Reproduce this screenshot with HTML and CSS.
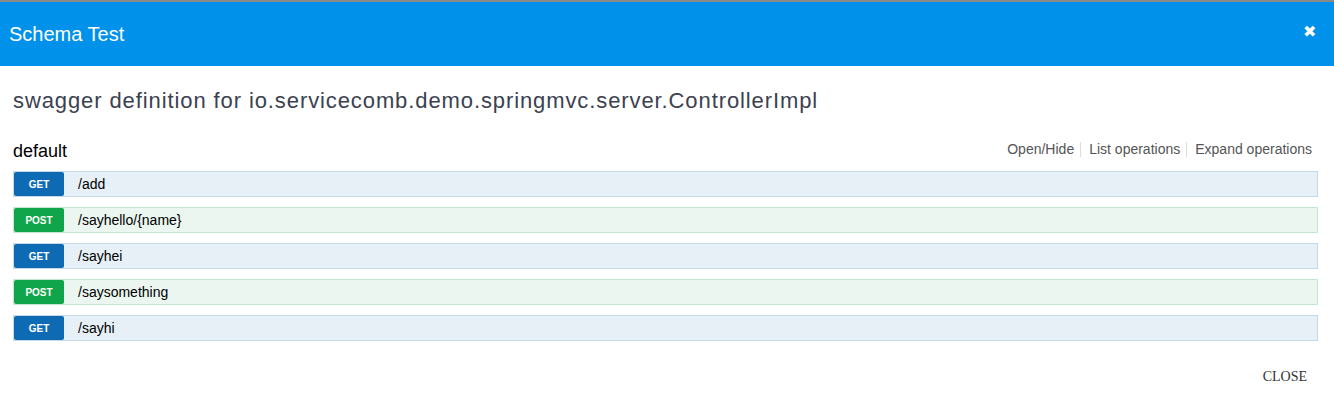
FILE: index.html
```html
<!DOCTYPE html>
<html lang="en">
  <head>
    <meta charset="UTF-8" />
    <title>Schema Test</title>
    <link rel="stylesheet" href="styles.css">
  </head>
  <body>
    <div class="dialog">
      <div class="dialog-header">
        <span class="dialog-title">Schema Test</span>
        <span class="dialog-close">&#10006;</span>
      </div>
      <div class="dialog-body">
        <h2 class="info-title">swagger definition for io.servicecomb.demo.springmvc.server.ControllerImpl</h2>
        <div class="resource">
          <div class="resource-heading">
            <span class="resource-name">default</span>
            <ul class="options">
              <li>Open/Hide</li>
              <li>List operations</li>
              <li>Expand operations</li>
            </ul>
          </div>
          <ul class="endpoints">
            <li class="op get"><span class="method">GET</span><span class="path">/add</span></li>
            <li class="op post"><span class="method">POST</span><span class="path">/sayhello/{name}</span></li>
            <li class="op get"><span class="method">GET</span><span class="path">/sayhei</span></li>
            <li class="op post"><span class="method">POST</span><span class="path">/saysomething</span></li>
            <li class="op get"><span class="method">GET</span><span class="path">/sayhi</span></li>
          </ul>
        </div>
      </div>
      <div class="dialog-footer">
        <span class="close-btn">CLOSE</span>
      </div>
    </div>
  </body>
</html>
```

FILE: styles.css
```css
body {
  margin: 0;
  padding: 0;
  background: #fff;
  font-family: "Liberation Sans", Arial, sans-serif;
}

.dialog {
  width: 1334px;
}

/* blue title bar */
.dialog-header {
  border-top: 2px solid #8a8a8a;
  height: 64px;
  background: #0091ea;
  display: flex;
  align-items: center;
  justify-content: space-between;
  padding: 0 18px 0 9px;
  color: #fff;
}

.dialog-title {
  font-size: 20px;
}

.dialog-close {
  font-size: 16px;
  margin-top: -6px;
}

.dialog-body {
  padding: 0 16px 0 13px;
}

.info-title {
  margin: 22px 0 0;
  font-size: 22px;
  letter-spacing: 0.9px;
  font-weight: normal;
  color: #3b4151;
  line-height: 26px;
}

.resource-heading {
  display: flex;
  justify-content: space-between;
  align-items: center;
  margin-top: 24px;
  height: 26px;
}

.resource-name {
  font-size: 18px;
  color: #000;
}

.options {
  list-style: none;
  margin: -3px 0 0;
  padding: 0 6px 0 0;
  display: flex;
  font-size: 14px;
  color: #555;
}

.options li {
  padding: 0 6px 0 8px;
  border-left: 1px solid #ddd;
  line-height: 15px;
}

.options li:first-child {
  border-left: none;
}

.options li:last-child {
  padding-right: 0;
}

.endpoints {
  list-style: none;
  margin: 7px 0 0;
  padding: 0;
  display: flex;
  flex-direction: column;
  gap: 10px;
}

.op {
  display: flex;
  align-items: center;
  height: 24px;
  border: 1px solid;
}

.op.get {
  background: #e7f0f7;
  border-color: #c3d9ec;
}

.op.post {
  background: #ebf6f0;
  border-color: #c3e8d1;
}

.method {
  width: 50px;
  height: 24px;
  line-height: 26px;
  text-align: center;
  color: #fff;
  font-size: 10px;
  font-weight: bold;
  border-radius: 2px;
}

.get .method {
  background: #0f6ab4;
}

.post .method {
  background: #10a54a;
}

.path {
  padding-left: 14px;
  font-size: 14px;
  color: #000;
}

.dialog-footer {
  display: flex;
  justify-content: flex-end;
  padding: 28px 27px 0 0;
}

.close-btn {
  font-family: "Liberation Serif", "Times New Roman", serif;
  font-size: 14px;
  color: #333;
}
```
